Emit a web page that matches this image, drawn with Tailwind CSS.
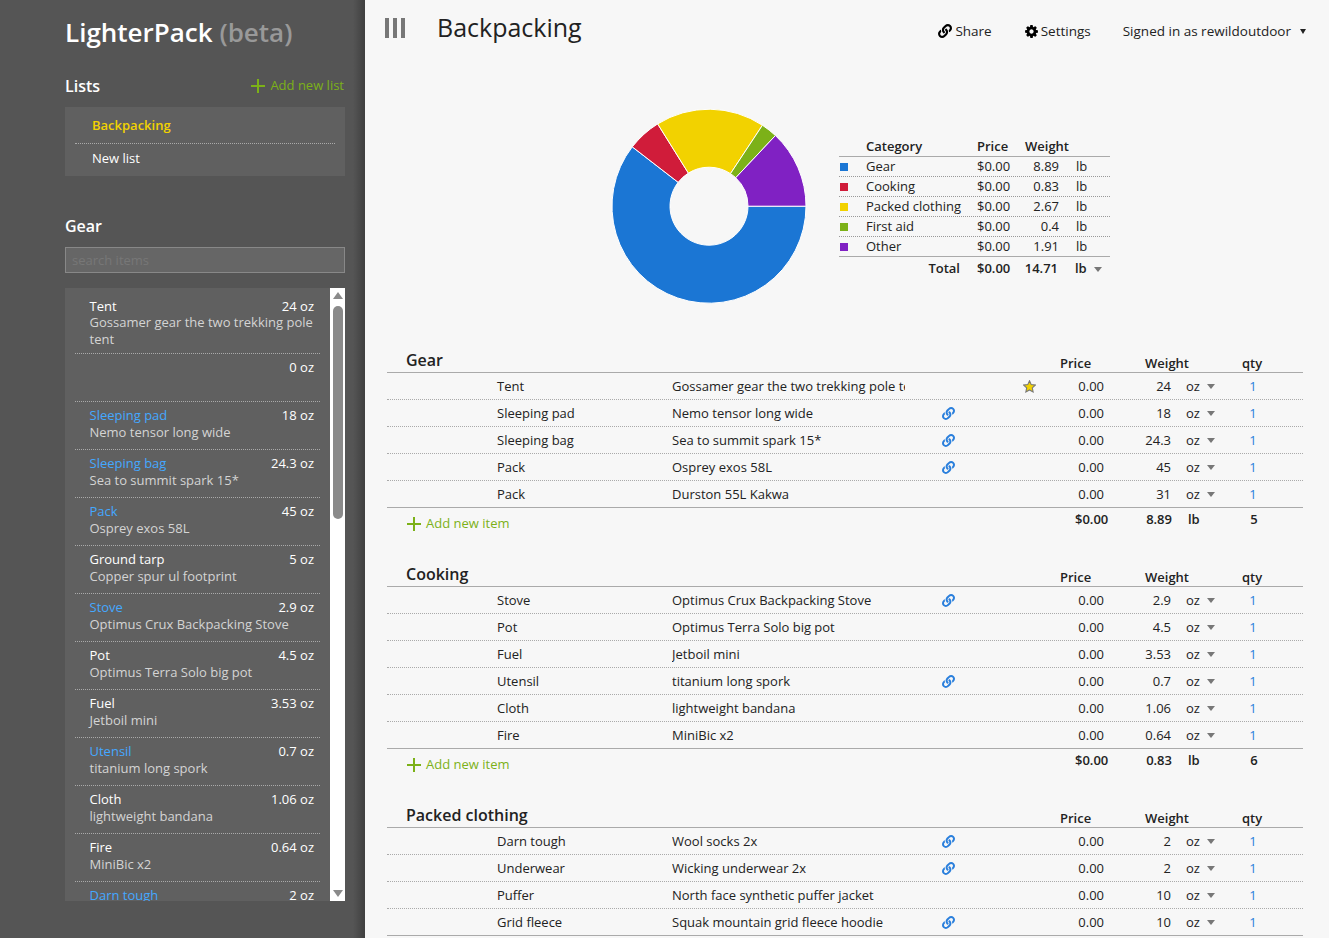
<!DOCTYPE html>
<html lang="en">
<head>
    <meta charset="UTF-8">
    <title>LighterPack</title>
    <script src="https://cdn.jsdelivr.net/npm/@tailwindcss/browser@4"></script>
</head>
<body class="bg-[#f7f7f7]">
    <svg class="hidden">
        <symbol id="link" viewBox="0 0 512 512"><path d="M326.612 185.391c59.747 59.809 58.927 155.698.36 214.59-.11.12-.24.25-.36.37l-67.2 67.2c-59.27 59.27-155.699 59.262-214.96 0-59.27-59.26-59.27-155.7 0-214.96l37.106-37.106c9.84-9.84 26.786-3.3 27.294 10.606.648 17.722 3.826 35.527 9.69 52.721 1.986 5.822.567 12.262-3.783 16.612l-13.087 13.087c-28.026 28.026-28.905 73.66-1.155 101.96 28.024 28.579 74.086 28.749 102.325.51l67.2-67.19c28.191-28.191 28.073-73.757 0-101.83-3.701-3.694-7.429-6.564-10.341-8.569a16.037 16.037 0 0 1-6.947-12.606c-.396-10.567 3.348-21.456 11.698-29.806l21.054-21.055c5.521-5.521 14.182-6.199 20.584-1.731a152.482 152.482 0 0 1 20.522 17.197zM467.547 44.449c-59.261-59.262-155.69-59.27-214.96 0l-67.2 67.2c-.12.12-.25.25-.36.37-58.566 58.892-59.387 154.781.36 214.59a152.454 152.454 0 0 0 20.521 17.196c6.402 4.468 15.064 3.789 20.584-1.731l21.054-21.055c8.35-8.35 12.094-19.239 11.698-29.806a16.037 16.037 0 0 0-6.947-12.606c-2.912-2.005-6.64-4.875-10.341-8.569-28.073-28.073-28.191-73.639 0-101.83l67.2-67.19c28.239-28.239 74.3-28.069 102.325.51 27.75 28.3 26.872 73.934-1.155 101.96l-13.087 13.087c-4.35 4.35-5.769 10.79-3.783 16.612 5.864 17.194 9.042 34.999 9.69 52.721.509 13.906 17.454 20.446 27.294 10.606l37.106-37.106c59.271-59.259 59.271-155.699.001-214.959z"/></symbol>
    </svg>

    <div class="flex h-[938px] overflow-hidden font-['Open_Sans',sans-serif] text-[13px] text-[#222]">
        <!-- sidebar -->
        <aside class="relative w-[365px] shrink-0 bg-[#555] pl-[65px] pr-[20px]">
            <div class="absolute top-0 right-0 bottom-0 w-[12px] bg-linear-to-r from-transparent to-black/25"></div>
            <h1 class="mt-[13px] h-[38px] text-[26px] leading-[38px] font-semibold text-white">LighterPack <span class="text-[#999]">(beta)</span></h1>

            <div class="mt-[23px] flex h-[24px] items-center justify-between">
                <h2 class="text-[16px] font-semibold text-white">Lists</h2>
                <a class="flex items-center gap-[5px] pr-px text-[#7cb118]">
                    <svg class="h-[14px] w-[14px]" viewBox="0 0 14 14"><path d="M7 0v14M0 7h14" stroke="#7cb118" stroke-width="2"/></svg>
                    Add new list
                </a>
            </div>
            <div class="mt-[9px] h-[69px] bg-[#606060] px-[10px]">
                <div class="flex h-[37px] items-center border-b border-dotted border-[#aaa] pt-[2px] pl-[17px] font-semibold text-[#f2d200]">Backpacking</div>
                <div class="flex h-[30px] items-center pl-[17px] text-white">New list</div>
            </div>

            <h2 class="mt-[38px] flex h-[24px] items-center text-[16px] font-semibold text-white">Gear</h2>
            <input class="mt-[9px] block h-[26px] w-full border border-[#888] bg-[#666] px-[6px] placeholder:text-[#777]" placeholder="search items">

            <div class="mt-[15px] flex h-[613px] overflow-hidden bg-[#606060]">
                <div id="library" class="min-w-0 flex-1 overflow-hidden pt-[5px]"></div>
                <div class="flex w-[15px] shrink-0 flex-col items-center bg-white">
                    <div class="mt-[4px] h-0 w-0 border-x-[5px] border-b-[7px] border-x-transparent border-b-[#8a8a8a]"></div>
                    <div class="mt-[7px] h-[213px] w-[10px] rounded-t-[5px] rounded-b-[5px] bg-[#8a8a8a]"></div>
                    <div class="mt-auto mb-[4px] h-0 w-0 border-x-[5px] border-t-[7px] border-x-transparent border-t-[#8a8a8a]"></div>
                </div>
            </div>
        </aside>

        <!-- main -->
        <main class="min-w-0 flex-1 pl-[22px]">
            <header class="-ml-[2px] flex h-[60px] items-start">
                <div class="mt-[18px] flex gap-[4px]">
                    <span class="h-[20px] w-[4px] bg-[#777]"></span>
                    <span class="h-[20px] w-[4px] bg-[#777]"></span>
                    <span class="h-[20px] w-[4px] bg-[#777]"></span>
                </div>
                <h2 class="mt-[10px] ml-[32px] text-[25px] leading-[34px] font-normal">Backpacking</h2>
                <nav class="mt-[21px] ml-auto flex h-[20px] items-center pr-[23px] text-[13.5px]">
                    <a class="flex items-center gap-[3px]"><svg class="h-[14px] w-[14px]"><use href="#link"/></svg>Share</a>
                    <a class="ml-[32px] flex items-center gap-[2px]">
                        <svg class="h-[15px] w-[15px]" viewBox="0 0 1792 1792"><path d="M1152 896q0-106-75-181t-181-75-181 75-75 181 75 181 181 75 181-75 75-181zm512-109v222q0 12-8 23t-20 13l-185 28q-19 54-39 91 35 50 107 138 10 12 10 25t-9 23q-27 37-99 108t-94 71q-12 0-26-9l-138-108q-44 23-91 38-16 136-29 186-7 28-36 28h-222q-14 0-24.5-8.5t-11.5-21.5l-28-184q-49-16-90-37l-141 107q-10 9-25 9-14 0-25-11-126-114-165-168-7-10-7-23 0-12 8-23 15-21 51-66.5t54-70.5q-27-50-41-99l-183-27q-13-2-21-12.5t-8-23.5v-222q0-12 8-23t19-13l186-28q14-46 39-92-40-57-107-138-10-12-10-24 0-10 9-23 26-36 98.5-107.5t94.5-71.5q13 0 26 10l138 107q44-23 91-38 16-136 29-186 7-28 36-28h222q14 0 24.5 8.5t11.5 21.5l28 184q49 16 90 37l142-107q9-9 24-9 13 0 25 10 129 119 165 170 7 8 7 22 0 12-8 23-15 21-51 66.5t-54 70.5q26 50 41 98l183 28q13 2 21 12.5t8 23.5z"/></svg>
                        Settings
                    </a>
                    <a class="ml-[32px]">Signed in as rewildoutdoor</a>
                    <span class="ml-[9px] h-0 w-0 border-x-[3.5px] border-t-[5px] border-x-transparent border-t-[#222]"></span>
                </nav>
            </header>

            <!-- chart and legend -->
            <section class="flex h-[289px] items-start pl-[224px]">
                <svg id="pie" class="mt-[48px] h-[196px] w-[196px] shrink-0" viewBox="0 0 196 196"></svg>
                <div class="mt-[77px] ml-[32px] w-[271px]">
                    <div class="flex h-[20px] items-center border-b border-[#aaa] font-semibold">
                        <span class="w-[27px]"></span><span class="w-[111px]">Category</span><span class="w-[48px]">Price</span><span>Weight</span>
                    </div>
                    <div id="legend"></div>
                    <div class="flex h-[24px] items-center font-semibold">
                        <span class="w-[121px] text-right">Total</span><span class="ml-[17px] w-[33px]">$0.00</span><span class="w-[48px] text-right">14.71</span><span class="ml-[17px] w-[19px]">lb</span>
                        <span class="h-0 w-0 border-x-[4px] border-t-[5px] border-x-transparent border-t-[#777]"></span>
                    </div>
                </div>
            </section>

            <div id="categories" class="w-[916px]"></div>
        </main>
    </div>

    <script>
        const library = [
            ['Tent', '24 oz', 'Gossamer gear the two trekking pole tent'],
            ['', '0 oz', ''],
            ['Sleeping pad', '18 oz', 'Nemo tensor long wide', 1],
            ['Sleeping bag', '24.3 oz', 'Sea to summit spark 15*', 1],
            ['Pack', '45 oz', 'Osprey exos 58L', 1],
            ['Ground tarp', '5 oz', 'Copper spur ul footprint'],
            ['Stove', '2.9 oz', 'Optimus Crux Backpacking Stove', 1],
            ['Pot', '4.5 oz', 'Optimus Terra Solo big pot'],
            ['Fuel', '3.53 oz', 'Jetboil mini'],
            ['Utensil', '0.7 oz', 'titanium long spork', 1],
            ['Cloth', '1.06 oz', 'lightweight bandana'],
            ['Fire', '0.64 oz', 'MiniBic x2'],
            ['Darn tough', '2 oz', 'Wool socks 2x', 1],
        ];

        document.getElementById('library').innerHTML = library.map(([name, weight, desc, linked], i) => `
            <div class="mx-[10px] border-b border-dotted border-[#aaa] pr-[6px] pl-[14.5px] ${i === 0 ? 'pt-[5px] pb-[5px]' : 'h-[48px] pt-[5px]'}">
                <div class="flex h-[16px] items-center justify-between leading-[16px]">
                    <span class="${linked ? 'text-[#44a8ff]' : 'text-white'}">${name}</span>
                    <span class="text-white">${weight}</span>
                </div>
                <div class="${i === 0 ? 'w-[230px]' : 'mt-px'} leading-[17px] text-[#d4d4d4]">${desc}</div>
            </div>`).join('');

        const legend = [
            ['Gear', '8.89', 'bg-[#1b76d4]'],
            ['Cooking', '0.83', 'bg-[#d01c3a]'],
            ['Packed clothing', '2.67', 'bg-[#f2d200]'],
            ['First aid', '0.4', 'bg-[#7cb118]'],
            ['Other', '1.91', 'bg-[#8021c3]'],
        ];

        document.getElementById('legend').innerHTML = legend.map(([name, weight, color], i) => `
            <div class="flex h-[20px] items-center border-b ${i < 4 ? 'border-dotted border-[#999]' : 'border-[#aaa]'}">
                <span class="ml-px h-[8px] w-[8px] ${color}"></span>
                <span class="ml-[18px] w-[111px]">${name}</span>
                <span class="w-[33px]">$0.00</span>
                <span class="w-[49px] text-right">${weight}</span>
                <span class="ml-[17px]">lb</span>
            </div>`).join('');

        // pie slices, clockwise from 3 o'clock
        const arc = (r, a) => `${(98 + r * Math.cos(a)).toFixed(2)} ${(98.2 + r * Math.sin(a)).toFixed(2)}`;
        let start = 0;
        document.getElementById('pie').innerHTML = [
            [8.89, '#1b76d4'], [0.83, '#d01c3a'], [2.67, '#f2d200'], [0.4, '#7cb118'], [1.91, '#8021c3'],
        ].map(([w, fill]) => {
            const end = start + (w / 14.7) * Math.PI * 2;
            const big = end - start > Math.PI ? 1 : 0;
            const d = `M${arc(39, start)} L${arc(97, start)} A97 97 0 ${big} 1 ${arc(97, end)} L${arc(39, end)} A39 39 0 ${big} 0 ${arc(39, start)} Z`;
            start = end;
            return `<path d="${d}" fill="${fill}" stroke="#fff" stroke-width="1"/>`;
        }).join('');

        const categories = [
            { name: 'Gear', price: '$0.00', weight: '8.89', qty: 5, items: [
                ['Tent', 'Gossamer gear the two trekking pole tent', '24', 0, 1],
                ['Sleeping pad', 'Nemo tensor long wide', '18', 1],
                ['Sleeping bag', 'Sea to summit spark 15*', '24.3', 1],
                ['Pack', 'Osprey exos 58L', '45', 1],
                ['Pack', 'Durston 55L Kakwa', '31'],
            ]},
            { name: 'Cooking', price: '$0.00', weight: '0.83', qty: 6, items: [
                ['Stove', 'Optimus Crux Backpacking Stove', '2.9', 1],
                ['Pot', 'Optimus Terra Solo big pot', '4.5'],
                ['Fuel', 'Jetboil mini', '3.53'],
                ['Utensil', 'titanium long spork', '0.7', 1],
                ['Cloth', 'lightweight bandana', '1.06'],
                ['Fire', 'MiniBic x2', '0.64'],
            ]},
            { name: 'Packed clothing', price: '$0.00', weight: '2.67', qty: 4, items: [
                ['Darn tough', 'Wool socks 2x', '2', 1],
                ['Underwear', 'Wicking underwear 2x', '2', 1],
                ['Puffer', 'North face synthetic puffer jacket', '10'],
                ['Grid fleece', 'Squak mountain grid fleece hoodie', '10', 1],
            ]},
        ];

        const row = ([name, desc, weight, linked, starred], last) => `
            <div class="flex h-[27px] items-center border-b pt-[2px] ${last ? 'border-solid border-[#aaa]' : 'border-dotted border-[#aaa]'}">
                <span class="ml-[110px] w-[175px]">${name}</span>
                <span class="w-[233px] overflow-hidden whitespace-nowrap">${desc}</span>
                <span class="ml-[37px] w-[81px]">${linked ? '<svg class="-mt-[2px] h-[13px] w-[13px] fill-[#2a7fdc]"><use href="#link"/></svg>' : ''}</span>
                <span class="w-[13px]">${starred ? '<svg class="-mt-[2px] h-[13px] w-[13px]" viewBox="0 0 24 24"><path d="M12 1.5l3.2 7 7.6.9-5.6 5.2 1.5 7.5L12 18.3 5.3 22.1l1.5-7.5L1.2 9.4l7.6-.9z" fill="#f2d200" stroke="#777" stroke-width="2"/></svg>' : ''}</span>
                <span class="w-[68px] text-right">0.00</span>
                <span class="w-[67px] text-right">${weight}</span>
                <span class="ml-[15px] w-[21px]">oz</span>
                <span class="-mt-[2px] h-0 w-0 border-x-[4px] border-t-[5px] border-x-transparent border-t-[#777]"></span>
                <span class="ml-[28px] w-[20px] text-center text-[#2a7fdc]">1</span>
            </div>`;

        document.getElementById('categories').innerHTML = categories.map(c => `
            <section class="pb-[55px]">
                <div class="flex h-[24px] items-end border-b border-[#aaa] font-semibold">
                    <h3 class="mb-[1px] ml-[19px] w-[654px] text-[16px] leading-[22px] font-semibold">${c.name}</h3>
                    <span class="-mb-[1px] w-[85px]">Price</span>
                    <span class="-mb-[1px] w-[97px]">Weight</span>
                    <span class="-mb-[1px]">qty</span>
                </div>
                ${c.items.map((item, i) => row(item, i === c.items.length - 1)).join('')}
                <div class="-mb-[55px] flex h-[55px] items-start font-semibold">
                    <a class="mt-[6px] ml-[20px] flex w-[668px] items-center gap-[5px] font-normal text-[#7cb118]">
                        <svg class="h-[14px] w-[14px]" viewBox="0 0 14 14"><path d="M7 0v14M0 7h14" stroke="#7cb118" stroke-width="2"/></svg>
                        Add new item
                    </a>
                    <span class="mt-[2px] w-[33px] text-right">${c.price}</span>
                    <span class="mt-[2px] w-[64px] text-right">${c.weight}</span>
                    <span class="mt-[2px] ml-[16px] w-[56px]">lb</span>
                    <span class="mt-[2px] w-[20px] text-center">${c.qty}</span>
                </div>
            </section>`).join('');
    </script>
</body>
</html>
